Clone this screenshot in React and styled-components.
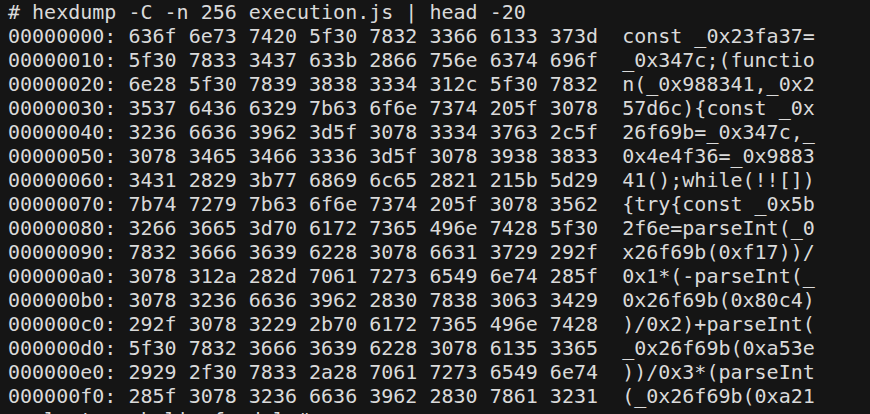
import React from "react";
import styled, { createGlobalStyle } from "styled-components";

const GlobalStyle = createGlobalStyle`
    html, body {
        margin:0;
        padding:0;
        background:#151515;
    }
`;

const Terminal = styled.div`
    width:870px;
    height:414px;
    overflow:hidden;
    background-color:#151515;
    color:#dadada;
    font-family:"DejaVu Sans Mono", "Liberation Mono", monospace;
    font-size:20px;
    line-height:24px;
    padding:0 0 0 8px;
    box-sizing:border-box;
`;

const Line = styled.div`
    white-space:pre;
    height:24px;
`;

const Offset = styled.span``;

const Hex = styled.span``;

const Ascii = styled.span``;

const rows = [
    ["00000000", "636f 6e73 7420 5f30 7832 3366 6133 373d", "const _0x23fa37="],
    ["00000010", "5f30 7833 3437 633b 2866 756e 6374 696f", "_0x347c;(functio"],
    ["00000020", "6e28 5f30 7839 3838 3334 312c 5f30 7832", "n(_0x988341,_0x2"],
    ["00000030", "3537 6436 6329 7b63 6f6e 7374 205f 3078", "57d6c){const _0x"],
    ["00000040", "3236 6636 3962 3d5f 3078 3334 3763 2c5f", "26f69b=_0x347c,_"],
    ["00000050", "3078 3465 3466 3336 3d5f 3078 3938 3833", "0x4e4f36=_0x9883"],
    ["00000060", "3431 2829 3b77 6869 6c65 2821 215b 5d29", "41();while(!![])"],
    ["00000070", "7b74 7279 7b63 6f6e 7374 205f 3078 3562", "{try{const _0x5b"],
    ["00000080", "3266 3665 3d70 6172 7365 496e 7428 5f30", "2f6e=parseInt(_0"],
    ["00000090", "7832 3666 3639 6228 3078 6631 3729 292f", "x26f69b(0xf17))/"],
    ["000000a0", "3078 312a 282d 7061 7273 6549 6e74 285f", "0x1*(-parseInt(_"],
    ["000000b0", "3078 3236 6636 3962 2830 7838 3063 3429", "0x26f69b(0x80c4)"],
    ["000000c0", "292f 3078 3229 2b70 6172 7365 496e 7428", ")/0x2)+parseInt("],
    ["000000d0", "5f30 7832 3666 3639 6228 3078 6135 3365", "_0x26f69b(0xa53e"],
    ["000000e0", "2929 2f30 7833 2a28 7061 7273 6549 6e74", "))/0x3*(parseInt"],
    ["000000f0", "285f 3078 3236 6636 3962 2830 7861 3231", "(_0x26f69b(0xa21"],
];

export default function App() {
    return (
        <Terminal>
            <GlobalStyle />
            <Line># hexdump -C -n 256 execution.js | head -20</Line>
            {rows.map(([off, hex, ascii]) => (
                <Line key={off}>
                    <Offset>{off}:</Offset> <Hex>{hex}</Hex>  <Ascii>{ascii}</Ascii>
                </Line>
            ))}
            <Line>analyst on kali  food l #</Line>
        </Terminal>
    );
}
